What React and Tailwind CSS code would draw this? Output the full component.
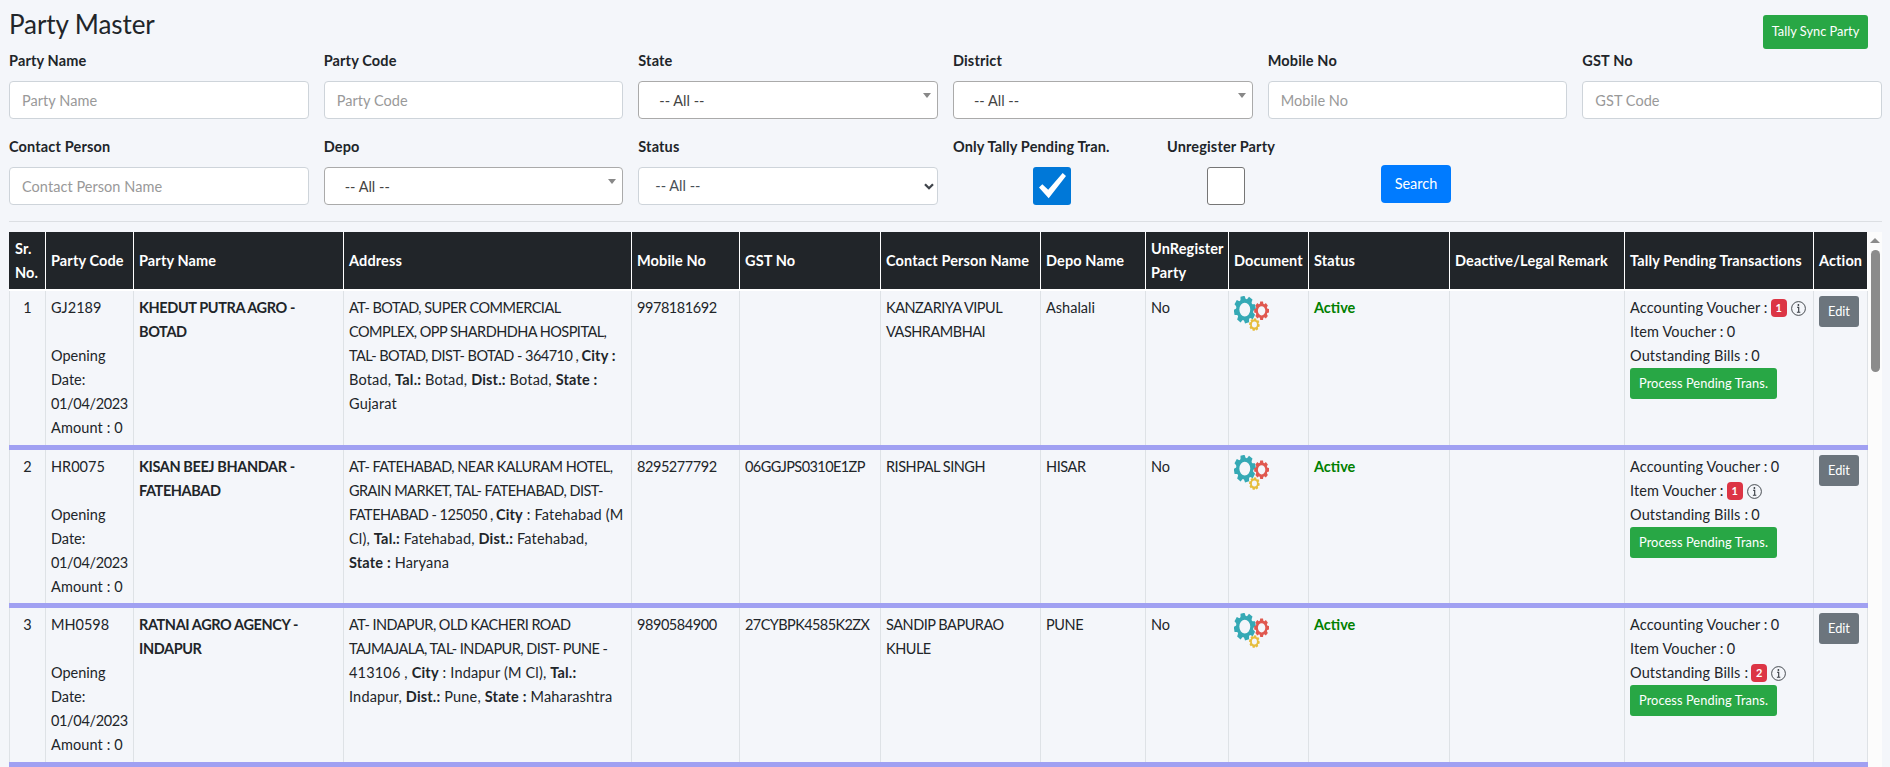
const COLUMNS = [
  { title: ['Sr.', 'No.'] },
  { title: ['Party Code'] },
  { title: ['Party Name'] },
  { title: ['Address'] },
  { title: ['Mobile No'] },
  { title: ['GST No'] },
  { title: ['Contact Person Name'] },
  { title: ['Depo Name'] },
  { title: ['UnRegister', 'Party'] },
  { title: ['Document'] },
  { title: ['Status'] },
  { title: ['Deactive/Legal Remark'] },
  { title: ['Tally Pending Transactions'] },
  { title: ['Action'] },
];

const GRID =
  'grid grid-cols-[36px_88px_210px_288px_108px_141px_160px_105px_83px_80px_141px_175px_189px_55px]';

/* Upper-case address text is set tighter than the mixed-case text beside it. */
function Caps({ children }) {
  return <span className="tracking-[-0.53px]">{children}</span>;
}

const ROWS = [
  {
    code: 'GJ2189',
    name: ['KHEDUT PUTRA AGRO -', 'BOTAD'],
    address: [
      <Caps>AT- BOTAD, SUPER COMMERCIAL</Caps>,
      <Caps>COMPLEX, OPP SHARDHDHA HOSPITAL,</Caps>,
      <><Caps>TAL- BOTAD, DIST- BOTAD - 364710 , </Caps><b>City :</b></>,
      <>Botad, <b>Tal.:</b> Botad, <b>Dist.:</b> Botad, <b>State :</b></>,
      <>Gujarat</>,
    ],
    mobile: '9978181692',
    gst: '',
    contact: ['KANZARIYA VIPUL', 'VASHRAMBHAI'],
    depo: 'Ashalali',
    depoClass: '',
    pending: [1, 0, 0],
    height: 'h-[159px]',
  },
  {
    code: 'HR0075',
    name: ['KISAN BEEJ BHANDAR -', 'FATEHABAD'],
    address: [
      <Caps>AT- FATEHABAD, NEAR KALURAM HOTEL,</Caps>,
      <Caps>GRAIN MARKET, TAL- FATEHABAD, DIST-</Caps>,
      <><Caps>FATEHABAD - 125050 , </Caps><b>City</b> : Fatehabad (M</>,
      <>Cl), <b>Tal.:</b> Fatehabad, <b>Dist.:</b> Fatehabad,</>,
      <><b>State :</b> Haryana</>,
    ],
    mobile: '8295277792',
    gst: '06GGJPS0310E1ZP',
    contact: ['RISHPAL SINGH'],
    depo: 'HISAR',
    depoClass: 'tracking-[-0.4px]',
    pending: [0, 1, 0],
    height: 'h-[158px]',
  },
  {
    code: 'MH0598',
    name: ['RATNAI AGRO AGENCY -', 'INDAPUR'],
    address: [
      <Caps>AT- INDAPUR, OLD KACHERI ROAD</Caps>,
      <Caps>TAJMAJALA, TAL- INDAPUR, DIST- PUNE -</Caps>,
      <>413106 , <b>City</b> : Indapur (M Cl), <b>Tal.:</b></>,
      <>Indapur, <b>Dist.:</b> Pune, <b>State :</b> Maharashtra</>,
    ],
    mobile: '9890584900',
    gst: '27CYBPK4585K2ZX',
    contact: ['SANDIP BAPURAO', 'KHULE'],
    depo: 'PUNE',
    depoClass: 'tracking-[-0.4px]',
    pending: [0, 0, 2],
    height: 'h-[159px]',
  },
];

const PENDING_LABELS = ['Accounting Voucher :', 'Item Voucher :', 'Outstanding Bills :'];

function Label({ children }) {
  return (
    <label className="block h-6 whitespace-nowrap text-[14.5px] font-bold leading-6 tracking-[0.15px]">
      {children}
    </label>
  );
}

function TextField({ label, placeholder }) {
  return (
    <div>
      <Label>{label}</Label>
      <input
        placeholder={placeholder}
        className="mt-2 block h-[38px] w-full rounded-[4px] border border-[#ced4da] bg-white px-3 text-[14.5px] tracking-[0.05px] text-[#495057] placeholder:text-[#999]"
      />
    </div>
  );
}

function SearchSelect({ label }) {
  return (
    <div>
      <Label>{label}</Label>
      <div className="mt-2 flex h-[38px] justify-between rounded-[4px] border border-[#aaa] bg-white pl-5 pr-[6px] text-[14.5px] leading-[37px] text-[#444]">
        <span>-- All --</span>
        <svg className="mt-[11px] h-[5px] w-2" viewBox="0 0 8 5">
          <path d="M0 0h8L4 5z" fill="#888" />
        </svg>
      </div>
    </div>
  );
}

function NativeSelect({ label }) {
  return (
    <div>
      <Label>{label}</Label>
      <div className="mt-2 flex h-[38px] items-center justify-between rounded-[4px] border border-[#ced4da] bg-white pl-[16px] pr-[3px] text-[14.5px] leading-9 text-[#495057]">
        <span>-- All --</span>
        <svg className="h-[7px] w-[10px]" viewBox="0 0 10 7">
          <path d="M1 1.2l4 4 4-4" fill="none" stroke="#3f444a" strokeWidth="2.3" />
        </svg>
      </div>
    </div>
  );
}

function Gear({ cx, cy, rx, ry, hole, color, turn }) {
  const teeth = [0, 45, 90, 135, 180, 225, 270, 315];
  return (
    <g transform={`translate(${cx} ${cy}) scale(${rx / 10} ${ry / 10})`}>
      {teeth.map((angle) => (
        <path
          key={angle}
          d="M-2.6 -6.5L-1.9 -10H1.9L2.6 -6.5z"
          fill={color}
          transform={`rotate(${angle + turn})`}
        />
      ))}
      <circle r={(8 + hole) / 2} fill="none" stroke={color} strokeWidth={8 - hole} />
    </g>
  );
}

function Gears() {
  return (
    <svg className="h-[35px] w-[35px]" viewBox="0 0 35 35">
      <Gear cx={10.8} cy={13.6} rx={10.9} ry={13.6} hole={5} color="#35a9b5" turn={-12} />
      <Gear cx={27.6} cy={14.8} rx={7.4} ry={9.2} hole={5} color="#e0584f" turn={0} />
      <Gear cx={20.4} cy={28.6} rx={5.3} ry={6.3} hole={4.8} color="#e6bd3c" turn={10} />
    </svg>
  );
}

function InfoIcon() {
  return (
    <svg className="h-[15px] w-[15px]" viewBox="0 0 15 15" fill="none" stroke="#343a40">
      <circle cx="7.5" cy="7.5" r="6.9" strokeWidth="0.9" />
      <path d="M6 6.3h1.7v4.9M5.9 11.2h3.4" strokeWidth="1.1" />
      <circle cx="7.4" cy="4" r="0.9" fill="#343a40" stroke="none" />
    </svg>
  );
}

function Cell({ className = '', children }) {
  return <div className={`border-l border-[#dee2e6] pl-[5px] pt-[5px] ${className}`}>{children}</div>;
}

function Lines({ lines }) {
  return lines.map((line, i) => <div key={i}>{line}</div>);
}

function PartyRow({ row, index }) {
  return (
    <div className={`${GRID} ${row.height} border-b-[5px] border-[#a0a0f2]`}>
      <Cell className="pr-[5px] text-center">{index + 1}</Cell>
      <Cell>
        <div>{row.code}</div>
        <div className="mt-6">Opening</div>
        <div>Date:</div>
        <div className="tracking-[-0.35px]">01/04/2023</div>
        <div className="tracking-[0.12px]">Amount : 0</div>
      </Cell>
      <Cell className="font-bold tracking-[-0.4px]">
        <Lines lines={row.name} />
      </Cell>
      <Cell className="tracking-[0.17px]">
        <Lines lines={row.address} />
      </Cell>
      <Cell className="tracking-[-0.45px]">{row.mobile}</Cell>
      <Cell className="tracking-[-0.58px]">{row.gst}</Cell>
      <Cell className="tracking-[-0.48px]">
        <Lines lines={row.contact} />
      </Cell>
      <Cell className={row.depoClass}>{row.depo}</Cell>
      <Cell>No</Cell>
      <Cell>
        <Gears />
      </Cell>
      <Cell className="font-bold text-[#008000]">Active</Cell>
      <Cell />
      <Cell>
        {PENDING_LABELS.map((label, i) => (
          <div key={label} className="flex h-6 items-center gap-[3px]">
            <span className="tracking-[0.13px]">{label}</span>
            {row.pending[i] ? (
              <>
                <span className="mr-px flex h-[18px] w-4 items-center justify-center rounded-[4px] bg-[#dc3545] text-[11px] font-bold text-white">
                  {row.pending[i]}
                </span>
                <InfoIcon />
              </>
            ) : (
              <span>0</span>
            )}
          </div>
        ))}
        <button className="block h-[31px] w-[147px] rounded-[3px] bg-[#28a745] pb-px text-[12.8px] tracking-[0.08px] text-white">
          Process Pending Trans.
        </button>
      </Cell>
      <Cell className="border-r">
        <button className="block h-[31px] w-10 rounded-[3px] bg-[#6c757d] pb-px text-[12.8px] text-white">Edit</button>
      </Cell>
    </div>
  );
}

export default function App() {
  return (
    <div className="h-[767px] w-[1890px] overflow-hidden bg-[#f4f6fa] pl-[9px] pr-[8px] font-['Lato','Liberation_Sans',sans-serif] text-[14.5px] text-[#212529]">
      <header className="flex h-[49px] items-start justify-between pr-[14px]">
        <h1 className="pt-[9px] text-[26px] leading-[30px] tracking-[-0.08px]">Party Master</h1>
        <button className="mt-[15px] h-[34px] w-[105px] rounded-[3px] bg-[#28a745] pb-px text-[12.8px] text-white">
          Tally Sync Party
        </button>
      </header>

      <section className="grid grid-cols-6 gap-x-[15px] gap-y-4">
        <TextField label="Party Name" placeholder="Party Name" />
        <TextField label="Party Code" placeholder="Party Code" />
        <SearchSelect label="State" />
        <SearchSelect label="District" />
        <TextField label="Mobile No" placeholder="Mobile No" />
        <TextField label="GST No" placeholder="GST Code" />
        <TextField label="Contact Person" placeholder="Contact Person Name" />
        <SearchSelect label="Depo" />
        <NativeSelect label="Status" />
        <div className="col-span-3 flex">
          <div className="w-[214px]">
            <Label>Only Tally Pending Tran.</Label>
            <div className="ml-[80px] mt-2 h-[38px] w-[38px] rounded-[3px] bg-[#0078d8]">
              <svg className="h-[38px] w-[38px]" viewBox="0 0 38 38">
                <path d="M6 20.5L9.3 17.2L15.2 22.8L29.7 6L33 9L15.7 31.3z" fill="#fff" />
              </svg>
            </div>
          </div>
          <div className="w-[214px]">
            <Label>Unregister Party</Label>
            <div className="ml-10 mt-2 h-[38px] w-[38px] rounded-[3px] border border-[#767676] bg-white" />
          </div>
          <button className="mt-[30px] h-[38px] w-[70px] rounded-[4px] bg-[#007bff] text-[14.5px] text-white">
            Search
          </button>
        </div>
      </section>

      <hr className="mt-4 border-[#dcdfe3]" />

      <main className="mt-[10px] flex">
        <div className="w-[1859px] whitespace-nowrap leading-6">
          <div className={`${GRID} h-[59px] border-b-2 border-white bg-[#212529] font-bold tracking-[0.12px] text-white`}>
            {COLUMNS.map((col, i) => (
              <div
                key={i}
                className="flex flex-col justify-center border-l border-white pl-[5px] first:border-[#212529] last:border-r"
              >
                <Lines lines={col.title} />
              </div>
            ))}
          </div>
          {ROWS.map((row, i) => (
            <PartyRow key={row.code} row={row} index={i} />
          ))}
        </div>
        <div className="flex h-[535px] w-[15px] flex-col items-center bg-[#fcfcfc] pt-[6px]">
          <svg className="h-[5px] w-[10px]" viewBox="0 0 10 5">
            <path d="M0 5h10L5 0z" fill="#8b8b8b" />
          </svg>
          <div className="mt-[7px] h-[122px] w-[9px] rounded-full bg-[#8b8b8b]" />
        </div>
      </main>
    </div>
  );
}
